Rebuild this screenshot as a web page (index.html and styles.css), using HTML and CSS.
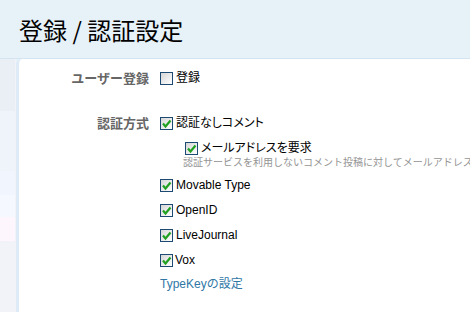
FILE: index.html
```html
<!DOCTYPE html>
<html lang="ja">

<head>
  <meta charset="UTF-8">
  <title>登録 / 認証設定</title>
  <link rel="stylesheet" href="styles.css">
</head>

<body>
  <header class="page-header">
    <h1 class="page-title">登録 / 認証設定</h1>
  </header>

  <div class="layout">
    <aside class="sidebar">
      <div class="sidebar-block block-a"></div>
      <div class="sidebar-block block-b"></div>
      <div class="sidebar-block block-c"></div>
      <div class="sidebar-block block-d"></div>
      <div class="sidebar-block block-e"></div>
    </aside>

    <main class="content">
      <div class="field field-register">
        <div class="field-label">ユーザー登録</div>
        <div class="field-body">
          <label class="option">
            <span class="checkbox"></span>
            <span class="option-text">登録</span>
          </label>
        </div>
      </div>

      <div class="field">
        <div class="field-label">認証方式</div>
        <div class="field-body">
          <label class="option">
            <span class="checkbox is-checked">
              <svg viewBox="0 0 11 11"><path d="M2 5.5 L4.5 8.5 L9.5 2.5" /></svg>
            </span>
            <span class="option-text">認証なしコメント</span>
          </label>

          <div class="sub-option">
            <label class="option">
              <span class="checkbox is-checked">
                <svg viewBox="0 0 11 11"><path d="M2 5.5 L4.5 8.5 L9.5 2.5" /></svg>
              </span>
              <span class="option-text">メールアドレスを要求</span>
            </label>
            <p class="hint">認証サービスを利用しないコメント投稿に対してメールアドレスを要求します。</p>
          </div>

          <label class="option option-spaced">
            <span class="checkbox is-checked">
              <svg viewBox="0 0 11 11"><path d="M2 5.5 L4.5 8.5 L9.5 2.5" /></svg>
            </span>
            <span class="option-text">Movable Type</span>
          </label>
          <label class="option">
            <span class="checkbox is-checked">
              <svg viewBox="0 0 11 11"><path d="M2 5.5 L4.5 8.5 L9.5 2.5" /></svg>
            </span>
            <span class="option-text">OpenID</span>
          </label>
          <label class="option">
            <span class="checkbox is-checked">
              <svg viewBox="0 0 11 11"><path d="M2 5.5 L4.5 8.5 L9.5 2.5" /></svg>
            </span>
            <span class="option-text">LiveJournal</span>
          </label>
          <label class="option">
            <span class="checkbox is-checked">
              <svg viewBox="0 0 11 11"><path d="M2 5.5 L4.5 8.5 L9.5 2.5" /></svg>
            </span>
            <span class="option-text option-tight">Vox</span>
          </label>

          <a class="settings-link" href="#">TypeKeyの設定</a>
        </div>
      </div>
    </main>
  </div>
</body>

</html>
```

FILE: styles.css
```css
*,
*::before,
*::after {
  box-sizing: border-box;
}

body,
h1,
p {
  margin: 0;
  padding: 0;
}

:root {
  /* COLORS */
  --header-bg: hsl(205, 55%, 94%);
  --header-line: hsl(208, 50%, 89%);
  --sidebar-line: hsl(210, 60%, 92%);
  --label-gray: hsl(0, 0%, 40%);
  --hint-gray: hsl(0, 0%, 58%);
  --box-border: hsl(208, 60%, 28%);
  --check-green: hsl(120, 65%, 38%);
  --link-blue: hsl(204, 55%, 42%);

  /* FONT FAMILY */
  --ff-primary: 'Liberation Sans', 'Noto Sans CJK JP', sans-serif;
  --ff-jp: 'Noto Sans CJK JP', sans-serif;
}

body {
  width: 470px;
  height: 312px;
  overflow: hidden;

  font-family: var(--ff-primary);
  font-size: 12px;
  color: #000;

  background-color: #fff;
}

.page-header {
  height: 59px;
  padding: 17px 0 0 19px;

  border-bottom: 1px solid var(--header-line);

  background-color: var(--header-bg);
}

.page-title {
  font-family: var(--ff-jp);
  font-size: 24px;
  font-weight: 400;
  line-height: 26px;
}

.layout {
  display: flex;
  height: 253px;

  background-color: var(--header-bg);
}

.sidebar {
  display: flex;
  flex-direction: column;

  width: 16px;

  background-color: hsl(220, 40%, 96%);
}

.sidebar-block {
  width: 15px;
}

.block-a {
  height: 52px;
  background-color: hsl(220, 35%, 94%);
}

.block-b {
  height: 60px;
  background-color: hsl(215, 60%, 96%);
}

.block-c {
  height: 24px;
  background-color: hsl(220, 80%, 97%);
}

.block-d {
  height: 22px;
  background-color: hsl(220, 90%, 98%);
}

.block-e {
  height: 24px;
  background-color: hsl(310, 80%, 98%);
}

.content {
  flex: 1;
  overflow: hidden;

  padding-top: 11px;

  border-left: 3px solid var(--sidebar-line);
  border-top-left-radius: 6px;

  background-color: #fff;
}

.field {
  display: grid;
  grid-template-columns: 130px 1fr;
  column-gap: 11px;
}

.field-register {
  margin-bottom: 29px;
}

.field-label {
  line-height: 16px;

  text-align: right;
  font-family: var(--ff-jp);
  font-size: 13px;
  font-weight: 700;

  color: var(--label-gray);
}

.field-body {
  display: flex;
  flex-direction: column;
  align-items: flex-start;
}

.option {
  display: flex;
  align-items: center;
  gap: 3px;

  height: 16px;
  line-height: 16px;
}

.option + .option {
  margin-top: 9px;
}

.option-spaced {
  margin-top: 10px;
}

.option-text {
  white-space: nowrap;
  font-feature-settings: 'palt';
}

.option-tight {
  margin-left: -1px;
}

.checkbox {
  display: grid;
  place-items: center;

  width: 13px;
  height: 13px;

  border: 1px solid var(--box-border);

  background: linear-gradient(135deg, hsl(0, 0%, 84%), #fff);
}

.checkbox svg {
  width: 11px;
  height: 11px;

  fill: none;
  stroke: var(--check-green);
  stroke-width: 2.2;
}

.sub-option {
  margin-top: 9px;
  margin-left: 25px;
}

.hint {
  margin-left: -2px;

  font-family: var(--ff-jp);
  font-size: 10px;
  line-height: 11px;
  white-space: nowrap;

  color: var(--hint-gray);
}

.settings-link {
  margin-top: 8px;

  line-height: 16px;
  text-decoration: none;

  color: var(--link-blue);
}
```
